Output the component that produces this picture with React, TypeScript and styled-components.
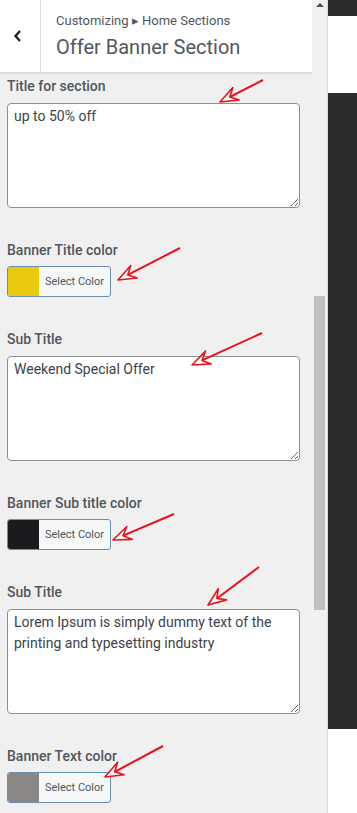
import React from "react";
import styled, { createGlobalStyle } from "styled-components";

const GlobalStyle = createGlobalStyle`
  html, body {
    margin: 0;
    padding: 0;
    height: 100%;
  }
  body {
    font-family: Roboto, "Liberation Sans", sans-serif;
    background: #ffffff;
  }
`;

const Page = styled.div`
  position: relative;
  display: flex;
  height: 813px;
  overflow: hidden;
`;

const Panel = styled.div`
  display: flex;
  width: 327px;
  background: #f0f0f1;
  border-right: 1px solid #dcdcde;
`;

const Main = styled.div`
  width: 312px;
  display: flex;
  flex-direction: column;
`;

const Header = styled.div`
  display: flex;
  height: 72px;
  background: #ffffff;
  border-bottom: 2px solid #dcdcde;
`;

const BackButton = styled.div`
  width: 41px;
  border-right: 1px solid #dcdcde;
  display: flex;
  align-items: center;
  justify-content: center;
  padding-right: 5px;
  box-sizing: border-box;
`;

const HeaderText = styled.div`
  display: flex;
  flex-direction: column;
  padding: 11px 0 0 15px;
  color: #50575e;
`;

const Crumb = styled.div`
  font-size: 13px;
  line-height: 20px;
`;

const Title = styled.div`
  font-size: 20px;
  line-height: 26px;
  margin-top: 3px;
`;

const Content = styled.div`
  padding: 2px 12px 0 7px;
  display: flex;
  flex-direction: column;
  gap: 32px;
`;

const Field = styled.div`
  display: flex;
  flex-direction: column;
`;

const Label = styled.div<{ $gap: number }>`
  font-size: 14px;
  line-height: 20px;
  font-weight: 500;
  color: #50575e;
  margin-bottom: ${(p) => p.$gap}px;
`;

const TextArea = styled.textarea`
  box-sizing: border-box;
  width: 293px;
  height: 105px;
  border: 1px solid #8c8f94;
  border-radius: 4px;
  background: #ffffff;
  padding: 2px 6px;
  font-family: Roboto, "Liberation Sans", sans-serif;
  font-size: 14px;
  line-height: 21px;
  color: #3c434a;
  resize: vertical;
  outline: none;
  overflow: hidden;
`;

const ColorButton = styled.div`
  box-sizing: border-box;
  display: flex;
  width: 104px;
  height: 31px;
  border: 1px solid #6a8fb4;
  border-radius: 3px;
  overflow: hidden;
  background: #f6f7f7;
`;

const Swatch = styled.span<{ $color: string }>`
  width: 31px;
  background: ${(p) => p.$color};
`;

const SwatchText = styled.span`
  flex: 1;
  display: flex;
  align-items: center;
  justify-content: center;
  font-size: 11px;
  color: #50575e;
`;

const Gutter = styled.div`
  width: 15px;
  display: flex;
  flex-direction: column;
  align-items: center;
  background: #f1f1f1;
`;

const UpArrow = styled.div`
  margin-top: 3px;
  width: 0;
  height: 0;
  border-left: 4px solid transparent;
  border-right: 4px solid transparent;
  border-bottom: 4px solid #505050;
`;

const Thumb = styled.div`
  margin-top: 289px;
  width: 11px;
  height: 314px;
  background: #c1c1c1;
`;

const Preview = styled.div`
  flex: 1;
  display: flex;
  flex-direction: column;
`;

const Band = styled.div<{ $dark: boolean; $h?: number }>`
  background: ${(p) => (p.$dark ? "#2c2c2e" : "#ffffff")};
  height: ${(p) => (p.$h ? `${p.$h}px` : "auto")};
  flex: ${(p) => (p.$h ? "none" : "1")};
`;

const Overlay = styled.svg`
  position: absolute;
  left: 0;
  top: 0;
  pointer-events: none;
`;

type Arrow = [number, number, number, number];

const arrows: Arrow[] = [
  [263, 80, 220, 102],
  [180, 248, 118, 280],
  [262, 333, 192, 365],
  [174, 514, 113, 540],
  [259, 567, 208, 605],
  [163, 746, 105, 777],
];

function ArrowMark({ a }: { a: Arrow }) {
  const [x1, y1, x2, y2] = a;
  const dx = x2 - x1;
  const dy = y2 - y1;
  const len = Math.hypot(dx, dy);
  const ux = dx / len;
  const uy = dy / len;
  const px = -uy;
  const py = ux;
  const back = 18;
  const wide = 7;
  const b1x = x2 - ux * back + px * wide;
  const b1y = y2 - uy * back + py * wide;
  const b2x = x2 - ux * back - px * wide;
  const b2y = y2 - uy * back - py * wide;
  const nx = x2 - ux * 11;
  const ny = y2 - uy * 11;
  return (
    <g>
      <line x1={x1} y1={y1} x2={nx} y2={ny} stroke="#e8121b" strokeWidth={2} />
      <polygon
        points={`${x2},${y2} ${b1x},${b1y} ${nx},${ny} ${b2x},${b2y}`}
        fill="rgba(255,255,255,0.7)"
        stroke="#e8121b"
        strokeWidth={1.6}
        strokeLinejoin="round"
      />
    </g>
  );
}

const fields = [
  { label: "Title for section", kind: "text", value: "up to 50% off" },
  { label: "Banner Title color", kind: "color", value: "#ebc90e" },
  { label: "Sub Title", kind: "text", value: "Weekend Special Offer" },
  { label: "Banner Sub title color", kind: "color", value: "#1c1a1e" },
  {
    label: "Sub Title",
    kind: "text",
    value: "Lorem Ipsum is simply dummy text of the printing and typesetting industry",
  },
  { label: "Banner Text color", kind: "color", value: "#8a8785" },
];

export default function App() {
  return (
    <>
      <GlobalStyle />
      <Page>
        <Panel>
          <Main>
            <Header>
              <BackButton>
                <svg width="10" height="14" viewBox="0 0 10 14">
                  <polyline
                    points="7,2 2.5,7 7,12"
                    fill="none"
                    stroke="#1d2327"
                    strokeWidth="2.4"
                  />
                </svg>
              </BackButton>
              <HeaderText>
                <Crumb>Customizing ▸ Home Sections</Crumb>
                <Title>Offer Banner Section</Title>
              </HeaderText>
            </Header>
            <Content>
              {fields.map((f, i) => (
                <Field key={i}>
                  <Label $gap={f.kind === "text" ? 7 : 6}>{f.label}</Label>
                  {f.kind === "text" ? (
                    <TextArea readOnly defaultValue={f.value} />
                  ) : (
                    <ColorButton>
                      <Swatch $color={f.value} />
                      <SwatchText>Select Color</SwatchText>
                    </ColorButton>
                  )}
                </Field>
              ))}
            </Content>
          </Main>
          <Gutter>
            <UpArrow />
            <Thumb />
          </Gutter>
        </Panel>
        <Preview>
          <Band $dark $h={16} />
          <Band $dark={false} $h={77} />
          <Band $dark $h={636} />
          <Band $dark={false} />
        </Preview>
        <Overlay width="357" height="813">
          {arrows.map((a, i) => (
            <ArrowMark key={i} a={a} />
          ))}
        </Overlay>
      </Page>
    </>
  );
}
